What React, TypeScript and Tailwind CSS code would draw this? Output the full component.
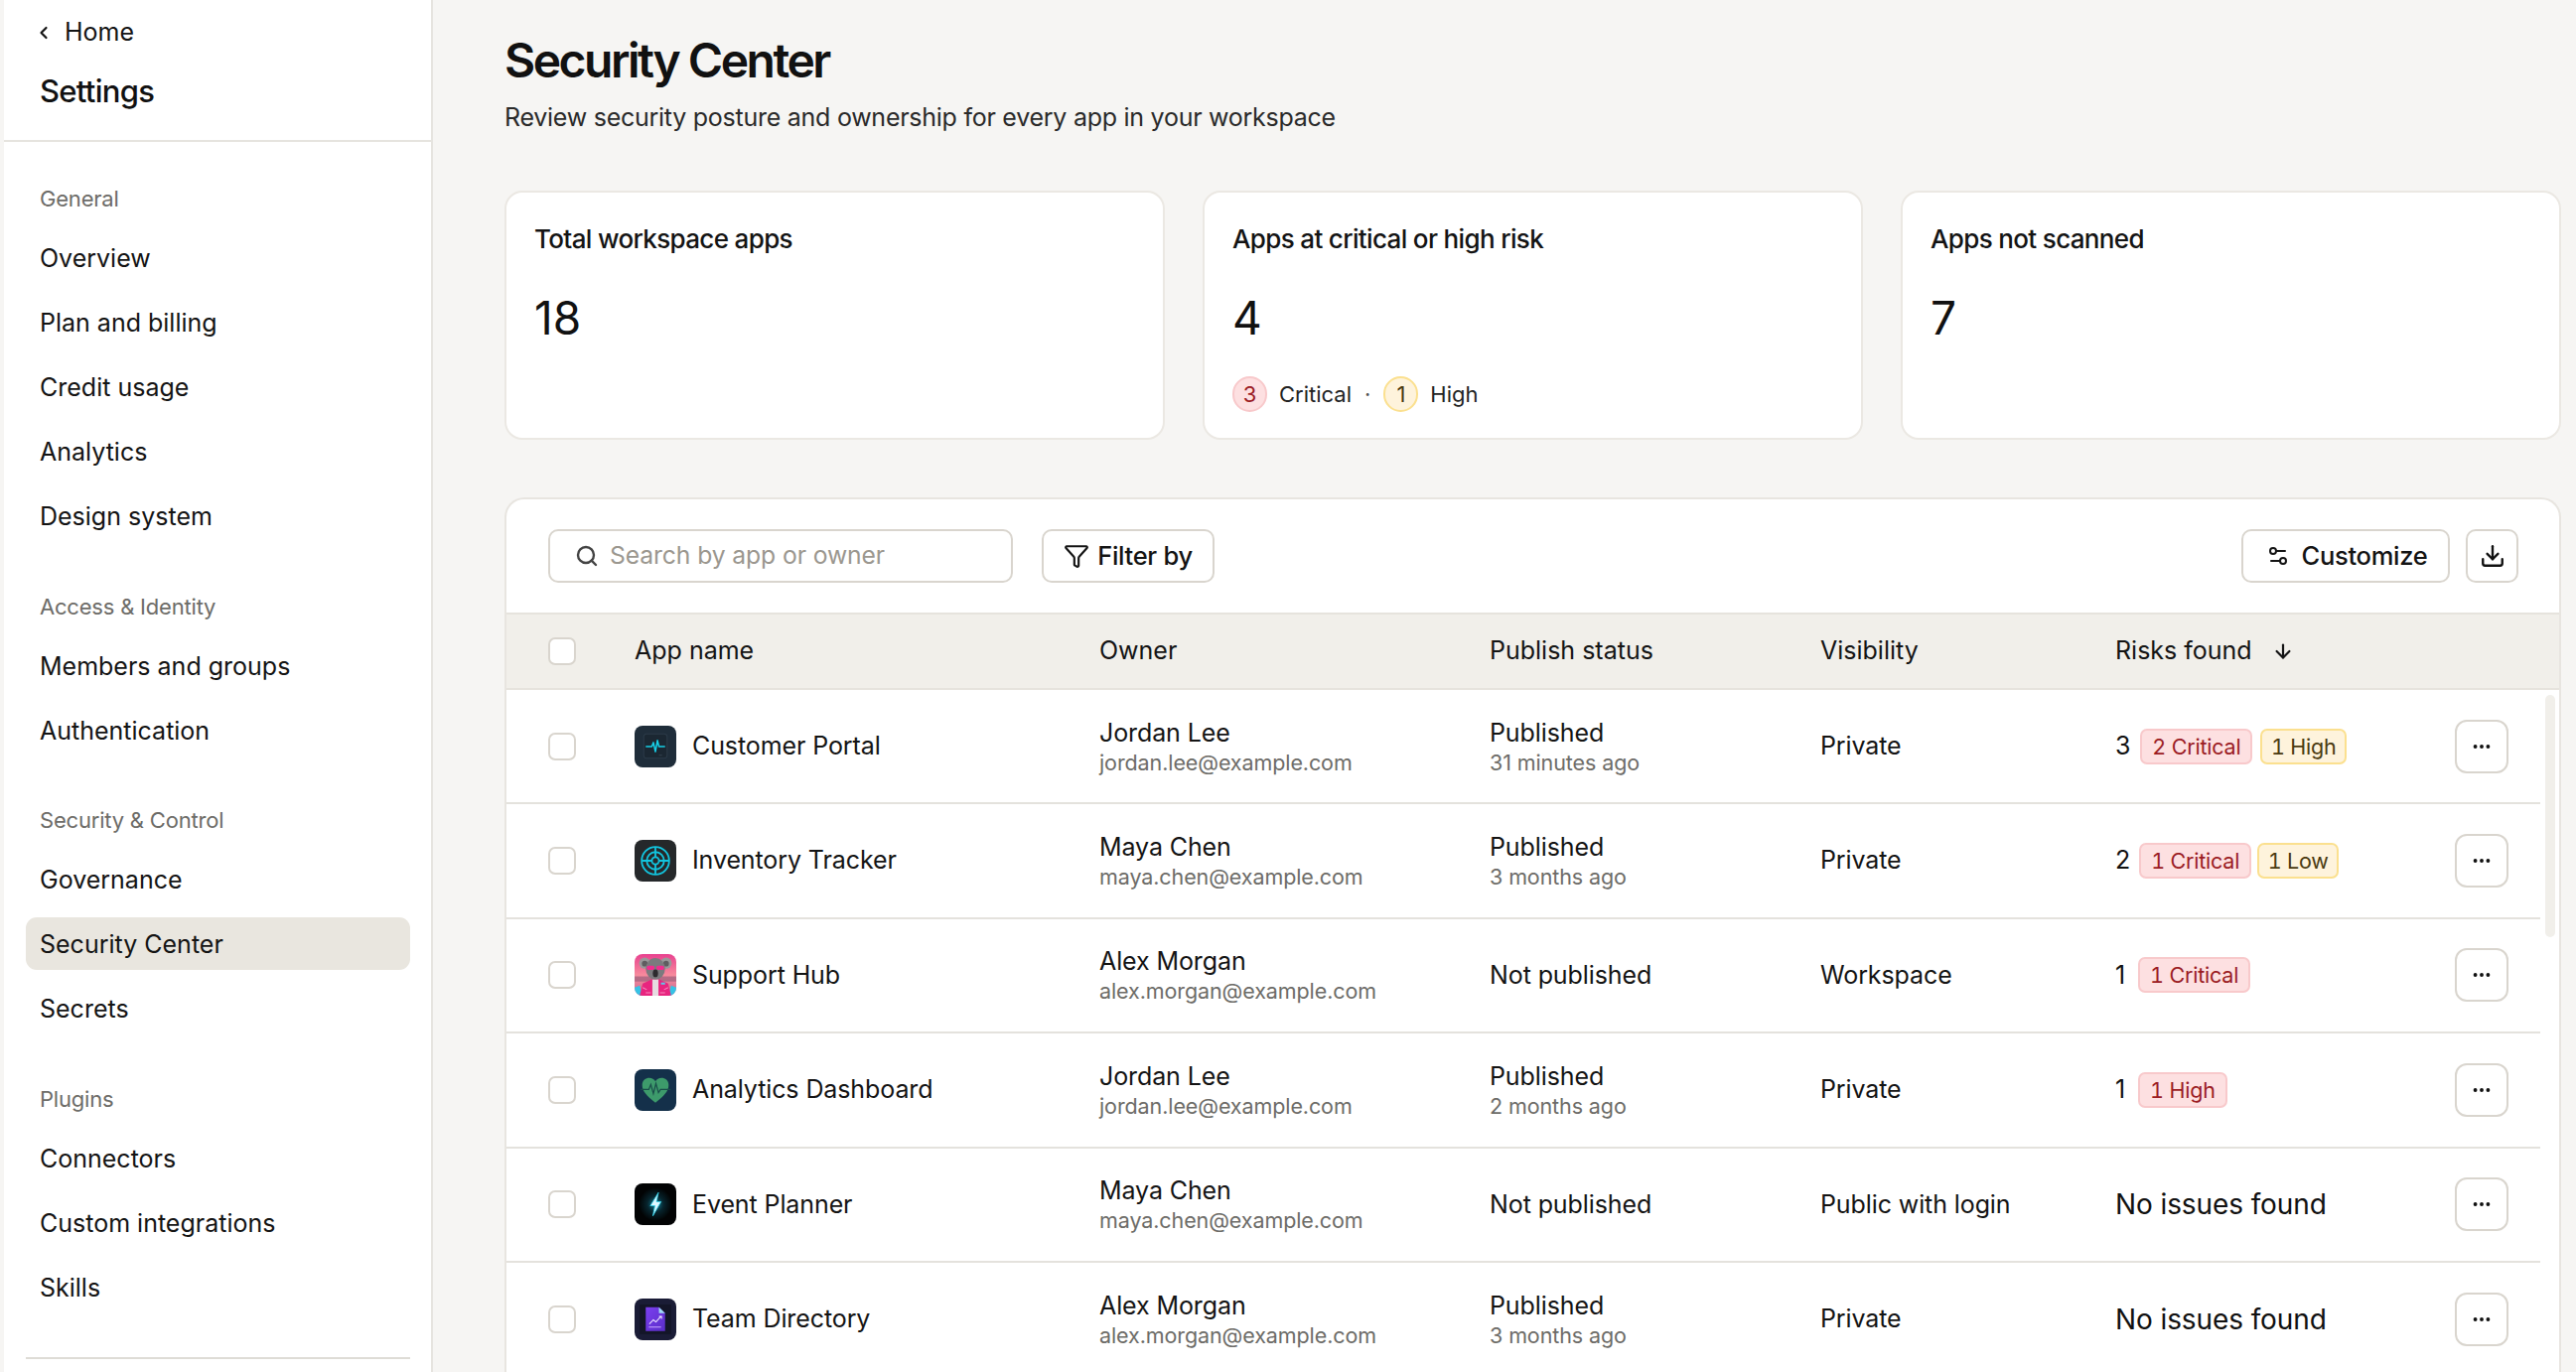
import React from "react";
import { ChevronLeft, Search, Funnel, Settings2, Download, ArrowDown, Ellipsis } from "lucide-react";

const Frame = ({ children }: { children: React.ReactNode }) => (
  <svg viewBox="0 0 41 41" className="w-[42px] h-[42px] shrink-0 rounded-[8px]">{children}</svg>
);

const PortalIcon = () => (
  <Frame>
    <rect width="41" height="41" fill="#1f2d3a" />
    <rect x="9" y="8" width="23" height="24" rx="3" fill="#1b2732" stroke="#2c3b49" strokeWidth="1" />
    <path d="M11 20.500h6l1.500-4 2 9 2-11 1.500 6h6" fill="none" stroke="#17cfe6" strokeWidth="1.500" strokeLinejoin="round" />
    <path d="M24 29h3" stroke="#34434f" strokeWidth="1" />
  </Frame>
);
const TargetIcon = () => (
  <Frame>
    <rect width="41" height="41" fill="#25282a" />
    <g fill="none" stroke="#12c4de" strokeWidth="1.800">
      <circle cx="20.500" cy="20.500" r="13.500" />
      <circle cx="20.500" cy="20.500" r="8.500" />
      <circle cx="20.500" cy="20.500" r="3.500" />
      <path d="M20.500 7v10M20.500 24v10M7 20.500h10M24 20.500h10" />
    </g>
  </Frame>
);
const KoalaIcon = () => (
  <Frame>
    <defs>
      <linearGradient id="koalaBg" x1="0" y1="0" x2="0" y2="1">
        <stop offset="0" stopColor="#e8418f" />
        <stop offset="0.5" stopColor="#f78a9c" />
        <stop offset="1" stopColor="#c86a90" />
      </linearGradient>
    </defs>
    <rect width="41" height="41" fill="url(#koalaBg)" />
    <rect x="0" y="22" width="41" height="5" fill="#8e5a78" opacity="0.6" />
    <path d="M0 41v-8l5-2 3 10zM41 41v-8l-5-2-3 10z" fill="#35c3e6" />
    <path d="M5 41l3-12 9-4h7l9 4 3 12z" fill="#e8257f" />
    <path d="M8 33l4 2M33 33l-4 2M11 38h5M25 38h5" stroke="#f78ac0" strokeWidth="1" />
    <rect x="17.500" y="25" width="6" height="16" fill="#e6dbe0" />
    <rect x="26" y="28" width="4" height="2" fill="#5fc7e8" />
    <circle cx="10" cy="9" r="5.500" fill="#9a989a" />
    <circle cx="31" cy="9" r="5.500" fill="#9a989a" />
    <circle cx="10" cy="9.500" r="2.800" fill="#5f5d60" />
    <circle cx="31" cy="9.500" r="2.800" fill="#5f5d60" />
    <ellipse cx="20.500" cy="14.500" rx="9.500" ry="10.500" fill="#7b7a7e" />
    <rect x="12" y="11.500" width="7.500" height="4" rx="1.500" fill="#f02d8f" />
    <rect x="21.500" y="11.500" width="7.500" height="4" rx="1.500" fill="#f02d8f" />
    <ellipse cx="20.500" cy="19" rx="2.600" ry="3.800" fill="#2c2a2e" />
  </Frame>
);
const HeartIcon = () => (
  <Frame>
    <rect width="41" height="41" fill="#14304a" />
    <path d="M20.500 33C12 26 7.500 21.500 7.500 15.500 7.500 11 11 8.500 14.500 8.500c2.600 0 4.800 1.300 6 3.500 1.200-2.200 3.400-3.500 6-3.500 3.500 0 7 2.500 7 7 0 6-4.500 10.500-13 17.500z" fill="#3d9a6b" />
    <path d="M6 20h8l2-5 2.500 9 2.500-10 2.500 9 2-3h10" fill="none" stroke="#1a4d4a" strokeWidth="1.200" />
  </Frame>
);
const BoltIcon = () => (
  <Frame>
    <defs>
      <radialGradient id="boltGlow">
        <stop offset="0" stopColor="#0f7f95" />
        <stop offset="0.5" stopColor="#07242d" />
        <stop offset="1" stopColor="#020506" />
      </radialGradient>
    </defs>
    <rect width="41" height="41" fill="#020304" />
    <circle cx="20.500" cy="20.500" r="16" fill="url(#boltGlow)" />
    <path d="M23.500 9l-8 13h4.500l-2 10 8-14h-4.500z" fill="#dff8ff" stroke="#2fd4ee" strokeWidth="0.800" />
  </Frame>
);
const DocIcon = () => (
  <Frame>
    <defs>
      <linearGradient id="docFill" x1="0" y1="0" x2="1" y2="1">
        <stop offset="0" stopColor="#7b3ff0" />
        <stop offset="1" stopColor="#5a2ec8" />
      </linearGradient>
    </defs>
    <rect width="41" height="41" fill="#1a1c36" />
    <rect x="5" y="6" width="31" height="29" fill="#131528" />
    <path d="M11 8.500h13l6 6V32H11z" fill="url(#docFill)" />
    <path d="M24 8.500l6 6h-6z" fill="#9fdcf5" />
    <path d="M14.500 25l4-4 2.500 2 5-5.500M24 17.500h2.500V20" fill="none" stroke="#f0eaff" strokeWidth="1" />
    <path d="M14 28h12" stroke="#c9a7ff" strokeWidth="1" />
  </Frame>
);

const Item = ({ label, active }: { label: string; active?: boolean }) => (
  <div className={active ? "h-[53px] pt-[2px] rounded-[11px] bg-[#e9e6df] px-[14px] flex items-center text-[25px] text-[#141414]" : "h-[53px] pt-[2px] rounded-[11px] px-[14px] flex items-center text-[25px] text-[#141414]"}>
    {label}
  </div>
);
const Label = ({ children }: { children: React.ReactNode }) => (
  <div className="h-[30px] px-[14px] flex items-center text-[22px] text-[#6d6c68] mb-[18px] tracking-[-0.2px]">{children}</div>
);

const Sidebar = () => (
  <aside className="w-[432px] ml-[4px] shrink-0 h-full bg-white border-r-2 border-[#e6e4df] flex flex-col">
    <div className="h-[143px] border-b-2 border-[#e6e4df] pt-[19px] px-[36px]">
      <div className="h-[28px] flex items-center text-[#141414] text-[25px]">
        <ChevronLeft className="w-[20px] h-[20px] -ml-[6px] mr-[11px]" strokeWidth={2.6} />
        Home
      </div>
      <div className="mt-[25px] h-[40px] flex items-center text-[31px] font-medium text-[#111] tracking-[-0.7px]">Settings</div>
    </div>
    <nav className="flex-1 flex flex-col pl-[22px] pr-[21px] pt-[42px]">
      <Label>General</Label>
      <div className="flex flex-col gap-[12px]">
        <Item label="Overview" />
        <Item label="Plan and billing" />
        <Item label="Credit usage" />
        <Item label="Analytics" />
        <Item label="Design system" />
      </div>
      <div className="mt-[50px]"><Label>Access &amp; Identity</Label></div>
      <div className="flex flex-col gap-[12px]">
        <Item label="Members and groups" />
        <Item label="Authentication" />
      </div>
      <div className="mt-[49px]"><Label>Security &amp; Control</Label></div>
      <div className="flex flex-col gap-[12px]">
        <Item label="Governance" />
        <Item label="Security Center" active />
        <Item label="Secrets" />
      </div>
      <div className="mt-[50px]"><Label>Plugins</Label></div>
      <div className="flex flex-col gap-[12px]">
        <Item label="Connectors" />
        <Item label="Custom integrations" />
        <Item label="Skills" />
      </div>
      <div className="mt-[44px] border-t-2 border-[#dedcd6]" />
    </nav>
  </aside>
);

const Checkbox = () => <div className="w-[28px] h-[28px] rounded-[7px] border-2 border-[#d9d5ce] bg-white shrink-0" />;

const StatCard = ({ title, value, children }: { title: string; value: string; children?: React.ReactNode }) => (
  <div className="h-[251px] bg-white rounded-[18px] border-2 border-[#ebe8e3] px-[28px] pt-[28px]">
    <div className="h-[36px] flex items-center text-[26px] font-medium text-[#141414] tracking-[-0.65px]">{title}</div>
    <div className="mt-[30px] h-[64px] flex items-center text-[46px] text-[#111]">{value}</div>
    {children}
  </div>
);

const Pink = ({ children }: { children: React.ReactNode }) => (
  <span className="h-[36px] px-[10px] flex items-center rounded-[7px] border-2 border-[#f8c9cb] bg-[#fde0e1] text-[#9b1c24] text-[21.5px] tracking-[-0.2px] tabular-nums">{children}</span>
);
const Yellow = ({ children }: { children: React.ReactNode }) => (
  <span className="h-[36px] px-[8.5px] flex items-center rounded-[7px] border-2 border-[#fbe08f] bg-[#fef3dc] text-[#4a3a10] text-[21.5px] tracking-[-0.2px] tabular-nums">{children}</span>
);

type RowData = {
  icon: React.ReactNode;
  name: string;
  owner: string;
  email: string;
  status: string;
  when?: string;
  visibility: string;
  risks: React.ReactNode;
};

const rows: RowData[] = [
  {
    icon: <PortalIcon />, name: "Customer Portal", owner: "Jordan Lee", email: "jordan.lee@example.com", status: "Published", when: "31 minutes ago", visibility: "Private",
    risks: <div className="flex items-center gap-[8px]"><span className="mr-[2px] text-[25px] text-[#111]">3</span><Pink>2 Critical</Pink><Yellow>1 High</Yellow></div>,
  },
  {
    icon: <TargetIcon />, name: "Inventory Tracker", owner: "Maya Chen", email: "maya.chen@example.com", status: "Published", when: "3 months ago", visibility: "Private",
    risks: <div className="flex items-center gap-[6px]"><span className="mr-[3px] text-[25px] text-[#111]">2</span><Pink>1 Critical</Pink><Yellow>1 Low</Yellow></div>,
  },
  {
    icon: <KoalaIcon />, name: "Support Hub", owner: "Alex Morgan", email: "alex.morgan@example.com", status: "Not published", visibility: "Workspace",
    risks: <div className="flex items-center gap-[13px]"><span className="text-[25px] text-[#111]">1</span><Pink>1 Critical</Pink></div>,
  },
  {
    icon: <HeartIcon />, name: "Analytics Dashboard", owner: "Jordan Lee", email: "jordan.lee@example.com", status: "Published", when: "2 months ago", visibility: "Private",
    risks: <div className="flex items-center gap-[13px]"><span className="text-[25px] text-[#111]">1</span><Pink>1 High</Pink></div>,
  },
  {
    icon: <BoltIcon />, name: "Event Planner", owner: "Maya Chen", email: "maya.chen@example.com", status: "Not published", visibility: "Public with login",
    risks: <span className="text-[28px] text-[#111]">No issues found</span>,
  },
  {
    icon: <DocIcon />, name: "Team Directory", owner: "Alex Morgan", email: "alex.morgan@example.com", status: "Published", when: "3 months ago", visibility: "Private",
    risks: <span className="text-[28px] text-[#111]">No issues found</span>,
  },
];

const Row = ({ r }: { r: RowData }) => (
  <div className="h-[115.4px] shrink-0 border-b-2 border-[#e4e2dd] pl-[43px] grid grid-cols-[87px_468px_393px_333px_297px_342px_54px] items-center text-[25px] text-[#141414] tracking-[-0.1px]">
    <Checkbox />
    <div className="flex items-center gap-[16px]">
      {r.icon}
      <span>{r.name}</span>
    </div>
    <div className="flex flex-col">
      <span className="leading-[32px]">{r.owner}</span>
      <span className="text-[21.5px] leading-[28px] text-[#6d6c68]">{r.email}</span>
    </div>
    <div className="flex flex-col">
      <span className="leading-[32px]">{r.status}</span>
      {r.when && <span className="text-[21.5px] leading-[28px] text-[#6d6c68]">{r.when}</span>}
    </div>
    <div>{r.visibility}</div>
    <div>{r.risks}</div>
    <div className="w-[54px] h-[54px] rounded-[12px] border-2 border-[#d9d5ce] bg-white flex items-center justify-center">
      <Ellipsis className="w-[22px] h-[22px] text-[#111]" strokeWidth={2.2} />
    </div>
  </div>
);

export default function App() {
  return (
    <div className="w-[2594px] h-[1382px] overflow-hidden bg-[#f6f5f3] flex [font-family:Inter,'Noto_Sans',sans-serif]">
      <Sidebar />
      <main className="flex-1 min-w-0 pl-[72px] pr-[15px] pt-[31px] flex flex-col">
        <h1 className="h-[60px] flex items-center text-[48px] font-semibold text-[#111] tracking-[-2.5px]">Security Center</h1>
        <p className="mt-[10px] h-[36px] flex items-center text-[25px] text-[#2a2a2a] tracking-[-0.26px]">Review security posture and ownership for every app in your workspace</p>
        <section className="mt-[55px] grid grid-cols-3 gap-[38px]">
          <StatCard title="Total workspace apps" value="18" />
          <StatCard title="Apps at critical or high risk" value="4">
            <div className="mt-[27px] flex items-center text-[22px] text-[#222]">
              <span className="w-[35px] h-[36px] rounded-full bg-[#fde0e1] border-2 border-[#f8c9cb] text-[#9b1c24] flex items-center justify-center">3</span>
              <span className="ml-[12px]">Critical</span>
              <span className="mx-[13px] text-[#555]">·</span>
              <span className="w-[35px] h-[36px] rounded-full bg-[#fef3dc] border-2 border-[#fbe08f] text-[#4a3a10] flex items-center justify-center">1</span>
              <span className="ml-[12px]">High</span>
            </div>
          </StatCard>
          <StatCard title="Apps not scanned" value="7" />
        </section>
        <section className="mt-[58px] flex-1 min-h-0 bg-white rounded-t-[20px] border-2 border-b-0 border-[#e8e5e0] flex flex-col overflow-hidden relative">
          <div className="h-[114px] shrink-0 pl-[42px] pr-[41px] flex items-center">
            <div className="w-[468px] h-[54px] rounded-[10px] border-2 border-[#d9d5ce] flex items-center px-[25px] gap-[11px]">
              <Search className="w-[24px] h-[24px] text-[#444]" strokeWidth={2.4} />
              <span className="text-[24.7px] tracking-[-0.1px] text-[#9b978f]">Search by app or owner</span>
            </div>
            <div className="ml-[29px] h-[54px] w-[174px] rounded-[10px] border-2 border-[#d9d5ce] flex items-center justify-center gap-[8px] text-[25.5px] text-[#141414] font-medium tracking-[-0.3px]">
              <Funnel className="w-[26px] h-[26px]" strokeWidth={2} />
              Filter by
            </div>
            <div className="ml-auto h-[54px] w-[210px] pl-[2px] rounded-[10px] border-2 border-[#d9d5ce] flex items-center justify-center gap-[12px] text-[25.5px] text-[#141414] font-medium tracking-[-0.3px]">
              <Settings2 className="w-[24px] h-[24px]" strokeWidth={2} />
              Customize
            </div>
            <div className="ml-[16px] w-[53px] h-[54px] rounded-[10px] border-2 border-[#d9d5ce] flex items-center justify-center">
              <Download className="w-[26px] h-[26px] text-[#111]" strokeWidth={2.2} />
            </div>
          </div>
          <div className="h-[78px] shrink-0 bg-[#f1efea] border-y-2 border-[#e6e3dd] pl-[42px] grid grid-cols-[87px_468px_393px_333px_297px_1fr] items-center text-[25px] text-[#141414]">
            <Checkbox />
            <span>App name</span>
            <span>Owner</span>
            <span>Publish status</span>
            <span>Visibility</span>
            <span className="flex items-center gap-[20px]">Risks found <ArrowDown className="w-[22px] h-[22px]" strokeWidth={2.4} /></span>
          </div>
          <div className="flex-1 min-h-0 overflow-hidden w-[2049px] -ml-px flex flex-col">
            {rows.map((r) => <Row key={r.name} r={r} />)}
          </div>
          <div className="absolute top-[197px] right-[4px] w-[10px] h-[244px] rounded-full bg-[#f1efea]" />
        </section>
      </main>
    </div>
  );
}
